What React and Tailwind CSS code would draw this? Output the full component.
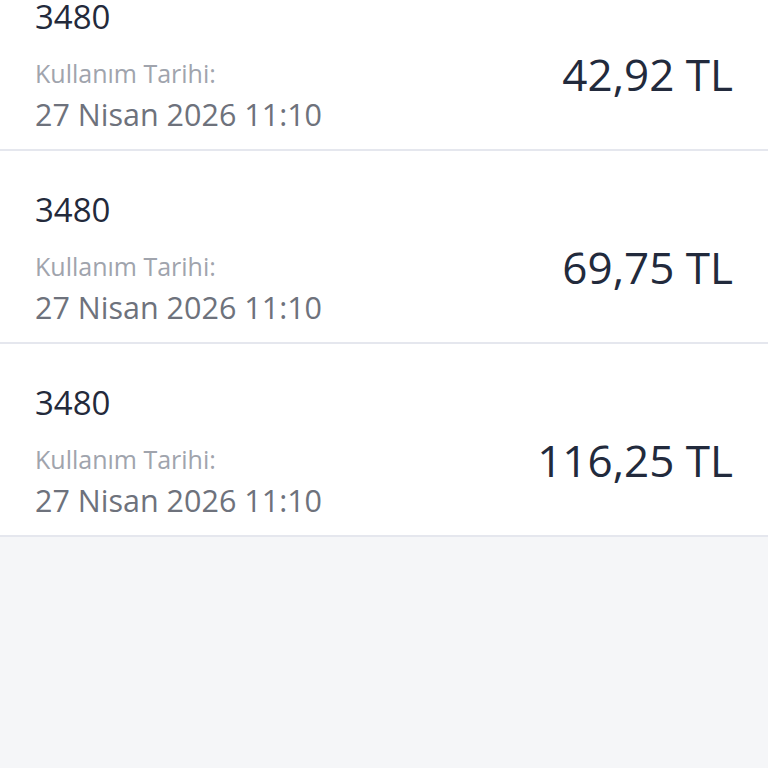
export default function App() {
  const rows = [
    { amount: "42,92 TL" },
    { amount: "69,75 TL" },
    { amount: "116,25 TL" },
  ];
  return (
    <div className="w-[768px] h-[768px] overflow-hidden bg-[#f5f6f8]" style={{ fontFamily: "'Open Sans', 'Noto Sans', sans-serif" }}>
      <div className="-mt-[42px] bg-white">
        {rows.map((r, i) => (
          <div key={i} className="px-[35px] pt-[41px] pb-[17px] border-b-2 border-[#e5e7ee]">
            <div className="text-[33px] leading-[36px] text-[#232a3b]">3480</div>
            <div className="mt-[22px] flex items-start justify-between">
              <div className="flex flex-col">
                <div className="text-[25px] leading-[32px] text-[#a0a4ad]">Kullanım Tarihi:</div>
                <div className="mt-[7px] text-[30.5px] leading-[36px] text-[#6e727c]">27 Nisan 2026 11:10</div>
              </div>
              <div className="-mt-[8px] text-[44px] leading-[50px] text-[#222a3c]">{r.amount}</div>
            </div>
          </div>
        ))}
      </div>
    </div>
  );
}
